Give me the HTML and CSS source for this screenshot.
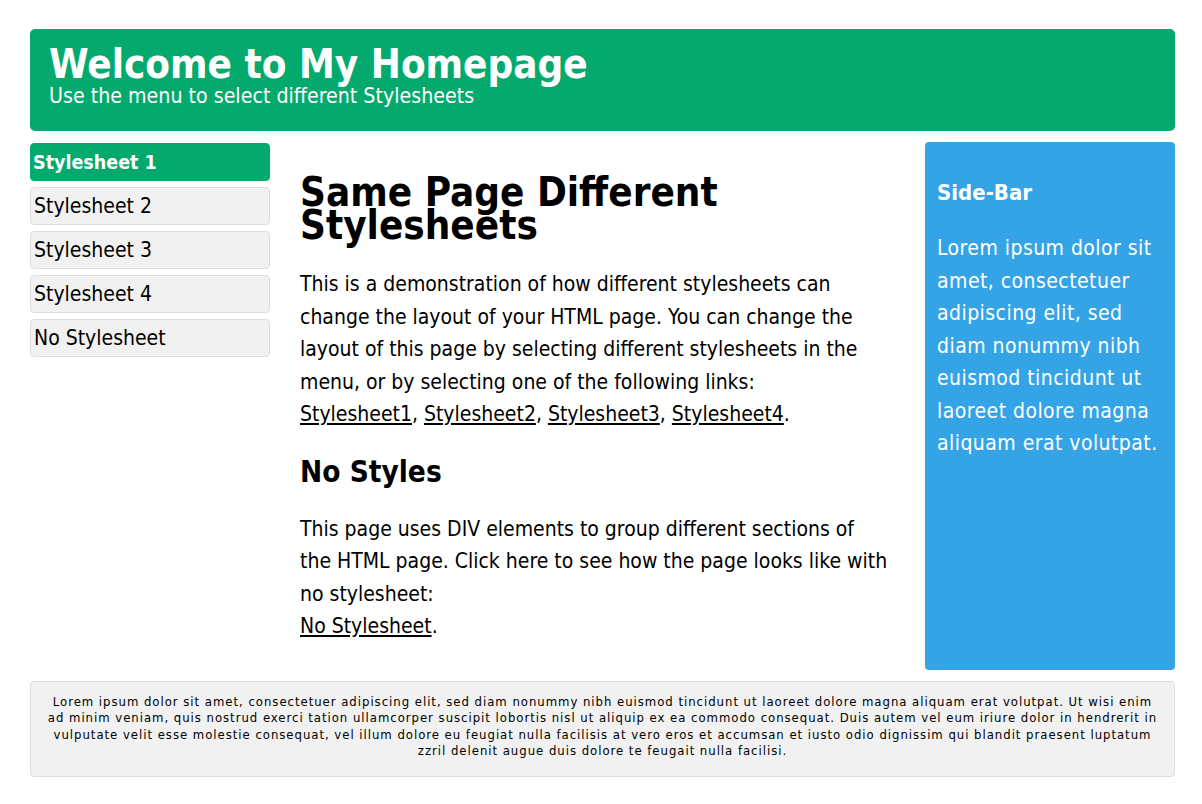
FILE: index.html
```html
<!DOCTYPE html>
<html>
<head>
<meta charset="utf-8">
<title>Same Page Different Stylesheets</title>
<link rel="stylesheet" href="styles.css">
</head>
<body>
<div class="page">
  <header class="header">
    <h1 class="title">Welcome to My Homepage</h1>
    <div class="subtitle">Use the menu to select different Stylesheets</div>
  </header>
  <div class="row">
    <nav class="menu">
      <a class="item active" href="#">Stylesheet 1</a>
      <a class="item" href="#">Stylesheet 2</a>
      <a class="item" href="#">Stylesheet 3</a>
      <a class="item" href="#">Stylesheet 4</a>
      <a class="item" href="#">No Stylesheet</a>
    </nav>
    <main class="main">
      <h2 class="main-title">Same Page Different Stylesheets</h2>
      <p class="text">This is a demonstration of how different stylesheets can change the layout of your HTML page. You can change the layout of this page by selecting different stylesheets in the menu, or by selecting one of the following links:<br><a href="#">Stylesheet1</a>, <a href="#">Stylesheet2</a>, <a href="#">Stylesheet3</a>, <a href="#">Stylesheet4</a>.</p>
      <h3 class="sub-title">No Styles</h3>
      <p class="text text-second">This page uses DIV elements to group different sections of the&nbsp;HTML page. Click here to see how the page looks like with no stylesheet:<br><a href="#">No Stylesheet</a>.</p>
    </main>
    <aside class="sidebar">
      <h3 class="side-title">Side-Bar</h3>
      <p class="side-text">Lorem ipsum dolor sit amet, consectetuer adipiscing elit, sed diam nonummy nibh euismod tincidunt ut laoreet dolore magna aliquam erat volutpat.</p>
    </aside>
  </div>
  <footer class="footer">Lorem ipsum dolor sit amet, consectetuer adipiscing elit, sed diam nonummy nibh euismod tincidunt ut laoreet dolore magna aliquam erat volutpat. Ut wisi enim ad minim veniam, quis nostrud exerci tation ullamcorper suscipit lobortis nisl ut aliquip ex ea commodo consequat. Duis autem vel eum iriure dolor in hendrerit in vulputate velit esse molestie consequat, vel illum dolore eu feugiat nulla facilisis at vero eros et accumsan et iusto odio dignissim qui blandit praesent luptatum zzril delenit augue duis dolore te feugait nulla facilisi.</footer>
</div>
</body>
</html>
```

FILE: styles.css
```css
html, body {
  margin: 0;
  padding: 0;
  background: #ffffff;
}
body {
  font-family: "DejaVu Sans Condensed", "DejaVu Sans", sans-serif;
  color: #000000;
}
.page {
  width: 1145px;
  padding: 29px 0 0 30px;
}
.header {
  background: #04aa6d;
  color: #ffffff;
  border-radius: 5px;
  height: 102px;
  box-sizing: border-box;
  padding: 15px 19px 0 19px;
}
.title {
  margin: 0;
  font-size: 40px;
  line-height: 40px;
  font-weight: bold;
}
.subtitle {
  font-size: 21.2px;
  line-height: 23px;
}
.row {
  display: flex;
  align-items: stretch;
  margin-top: 11px;
}
.menu {
  width: 240px;
  flex: none;
  display: flex;
  flex-direction: column;
  gap: 6px;
  padding-top: 1px;
}
.item {
  display: block;
  height: 38px;
  box-sizing: border-box;
  border: 1px solid #dddddd;
  border-radius: 4px;
  background: #f1f1f1;
  color: #000000;
  text-decoration: none;
  font-size: 21px;
  line-height: 37px;
  padding-left: 3px;
}
.item.active {
  background: #04aa6d;
  border-color: #04aa6d;
  color: #ffffff;
  font-weight: bold;
  font-size: 19.5px;
  padding-left: 2px;
}
.main {
  flex: 1;
  margin-left: 30px;
  margin-right: 20px;
  padding-top: 34px;
}
.main-title {
  margin: 0;
  font-size: 40px;
  line-height: 33px;
  font-weight: bold;
}
.text {
  font-size: 21px;
  line-height: 32.5px;
  margin: 26px 0 0 0;
}
.text-second {
  margin-top: 24px;
}
.text a {
  color: #000000;
}
.sub-title {
  margin: 24px 0 0 0;
  font-size: 29.5px;
  line-height: 34px;
  font-weight: bold;
}
.sidebar {
  width: 250px;
  flex: none;
  box-sizing: border-box;
  background: #35a4e6;
  color: #ffffff;
  border-radius: 4px;
  padding: 36px 12px 20px 12px;
  min-height: 528px;
}
.side-title {
  margin: 0;
  font-size: 22px;
  line-height: 30px;
  font-weight: bold;
}
.side-text {
  margin: 24px 0 0 0;
  font-size: 21px;
  line-height: 32.5px;
  letter-spacing: 0.45px;
}
.footer {
  margin-top: 11px;
  background: #f1f1f1;
  border: 1px solid #dddddd;
  border-radius: 4px;
  box-sizing: border-box;
  height: 96px;
  padding: 12px 15px;
  font-size: 13px;
  line-height: 16.3px;
  letter-spacing: 0.97px;
  text-align: center;
}
```
